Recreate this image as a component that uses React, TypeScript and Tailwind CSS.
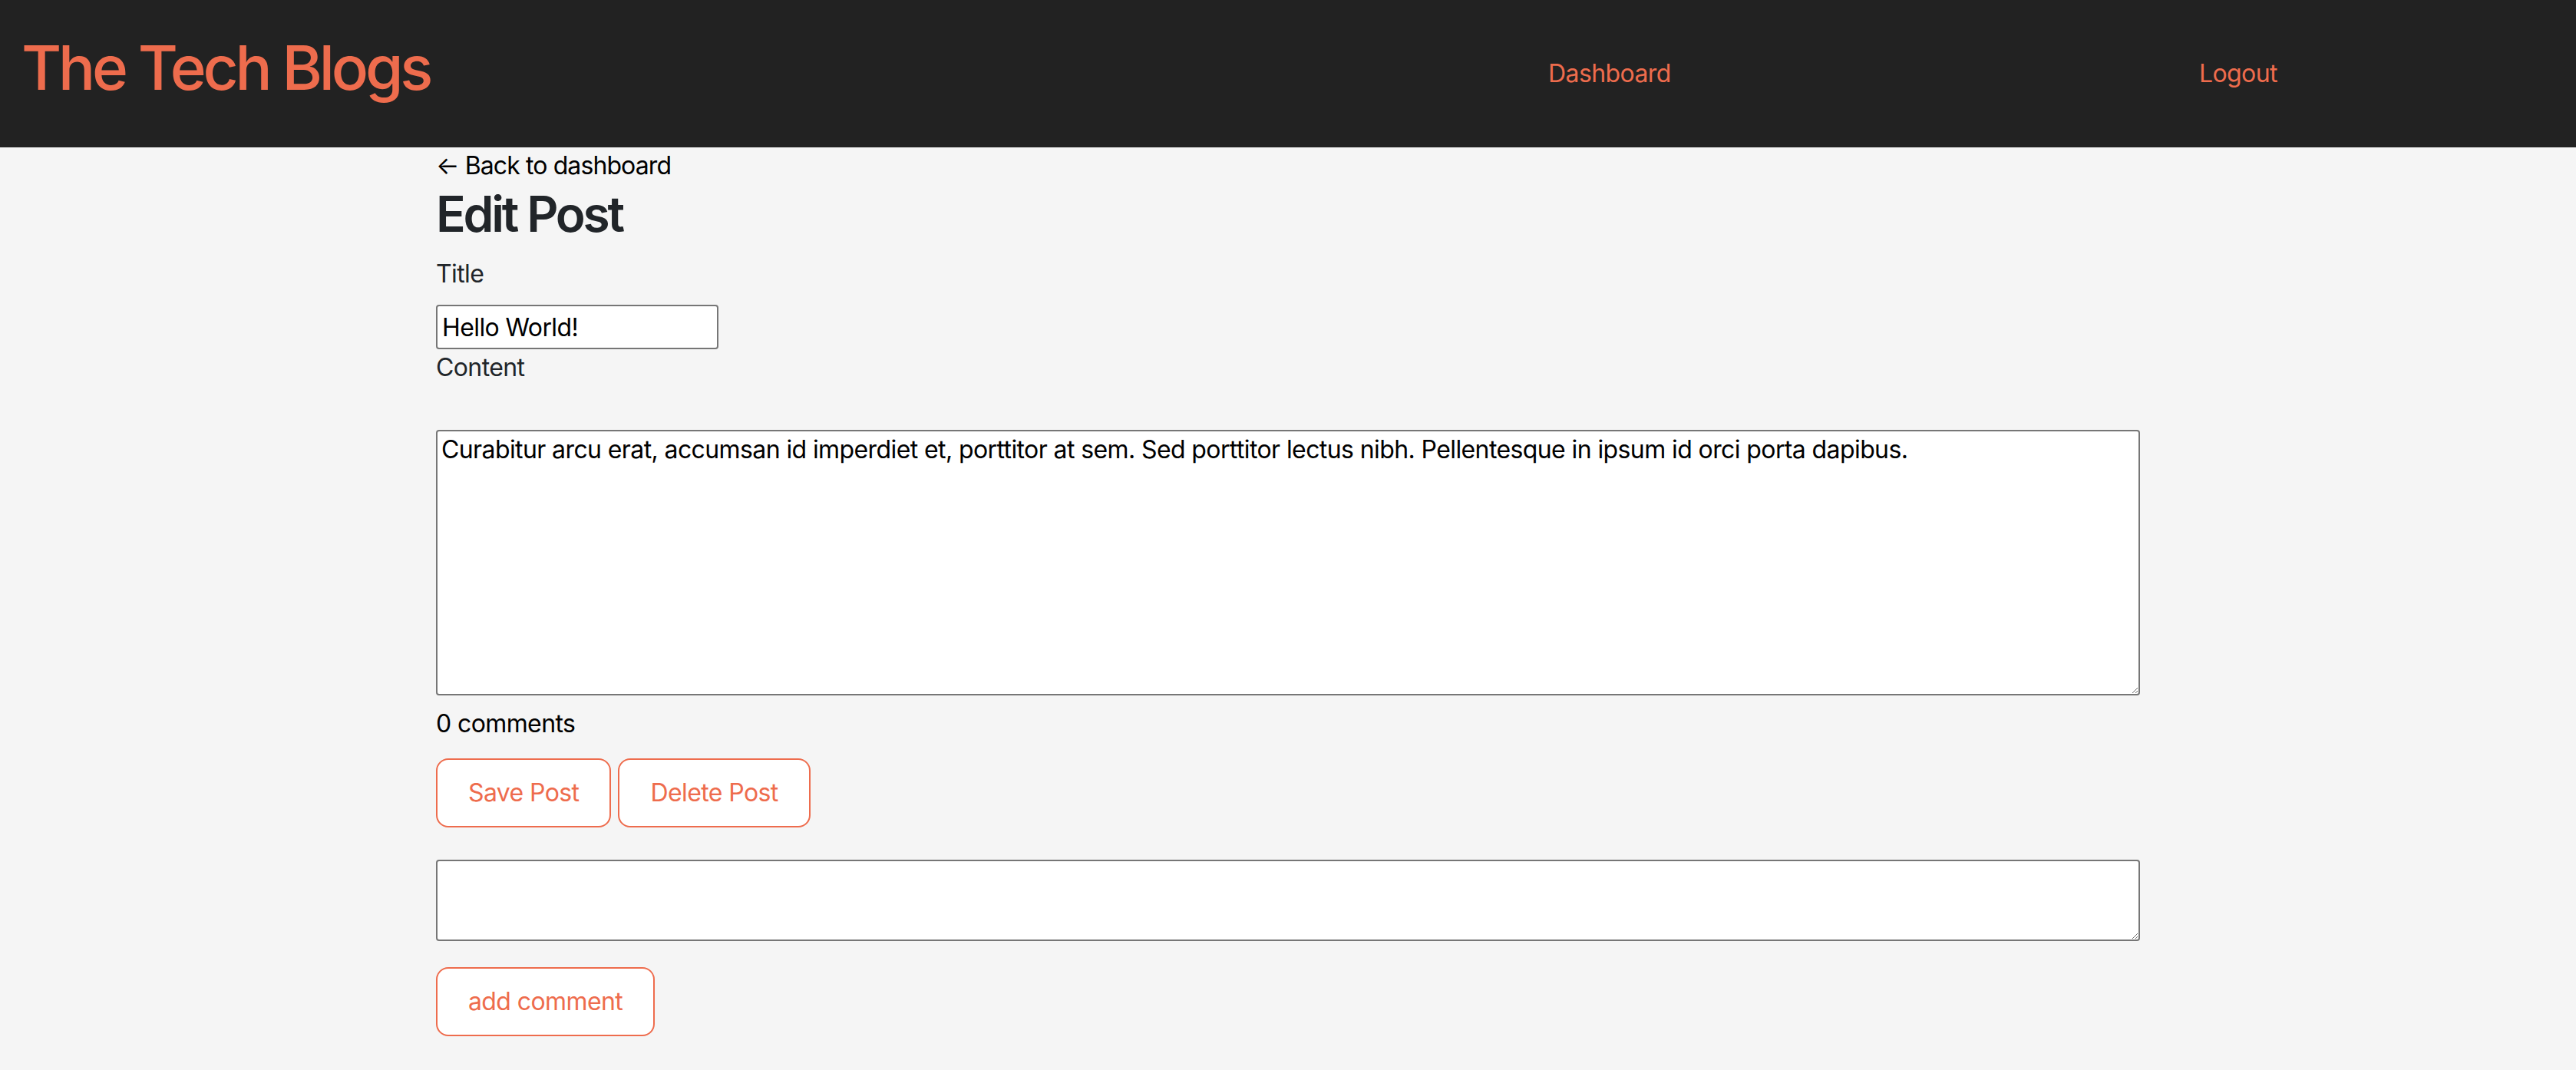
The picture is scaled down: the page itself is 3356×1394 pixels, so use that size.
import React from "react";

const font = { fontFamily: "Inter, 'Noto Sans', sans-serif" };

export default function App() {
  return (
    <div className="min-h-[1394px] bg-[#f5f5f5] tracking-[-0.6px]" style={font}>
      <header className="flex h-[192px] items-center bg-[#222222]">
        <h1 className="mb-[16px] pl-[28px] text-[80px] leading-none font-medium tracking-[-4.2px] text-[#ee6c4d]">
          The Tech Blogs
        </h1>
        <nav className="ml-auto mr-[45px] flex w-[1638px] justify-around">
          <a className="text-[32px] leading-[48px] text-[#ee6c4d]">Dashboard</a>
          <a className="text-[32px] leading-[48px] text-[#ee6c4d]">Logout</a>
        </nav>
      </header>
      <main className="mx-auto w-[2220px]">
        <a className="block text-[32px] leading-[48px] tracking-[-0.9px] text-black">← Back to dashboard</a>
        <h2 className="mb-[16px] text-[64px] leading-[77px] font-semibold tracking-[-3.2px] text-[#212529]">Edit Post</h2>
        <label className="mb-[16px] block text-[32px] leading-[48px] text-[#212529]">Title</label>
        <input
          defaultValue="Hello World!"
          className="block h-[58px] w-[368px] rounded-[4px] border-2 border-[#767676] bg-white px-[6px] text-[32px] tracking-[-0.6px] text-black"
        />
        <label className="block text-[32px] leading-[48px] text-[#212529]">Content</label>
        <textarea
          defaultValue="Curabitur arcu erat, accumsan id imperdiet et, porttitor at sem. Sed porttitor lectus nibh. Pellentesque in ipsum id orci porta dapibus."
          className="mt-[57px] block h-[346px] w-full rounded-[4px] border-2 border-[#767676] bg-white px-[5px] py-[4px] text-[32px] leading-[40px] tracking-[-0.6px] text-black"
        />
        <p className="mt-[13px] text-[32px] leading-[48px] text-black">0 comments</p>
        <div className="mt-[21px] flex gap-[9px]">
          <button className="h-[90px] rounded-[16px] border-2 border-[#ee6c4d] bg-white px-[40px] text-[32px] tracking-[-0.6px] text-[#ee6c4d]">
            Save Post
          </button>
          <button className="h-[90px] rounded-[16px] border-2 border-[#ee6c4d] bg-white px-[40px] text-[32px] tracking-[-0.6px] text-[#ee6c4d]">
            Delete Post
          </button>
        </div>
        <textarea className="mt-[42px] block h-[106px] w-full rounded-[4px] border-2 border-[#767676] bg-white px-[5px] py-[4px] text-[32px]" />
        <button className="mt-[34px] h-[90px] rounded-[16px] border-2 border-[#ee6c4d] bg-white px-[40px] text-[32px] tracking-[-0.6px] text-[#ee6c4d]">
          add comment
        </button>
      </main>
    </div>
  );
}
